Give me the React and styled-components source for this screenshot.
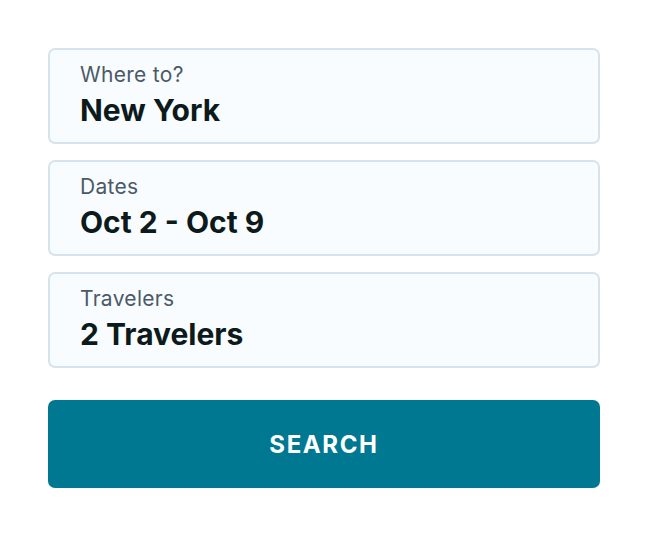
import React from "react";
import styled, { createGlobalStyle } from "styled-components";

const Global = createGlobalStyle`
  html, body { margin: 0; padding: 0; background: #ffffff; }
  body { font-family: Inter, "Noto Sans", sans-serif; }
`;

const Page = styled.div`
  width: 648px;
  height: 536px;
  box-sizing: border-box;
  padding: 48px;
  display: flex;
  flex-direction: column;
`;

const Fields = styled.div`
  display: flex;
  flex-direction: column;
  gap: 16px;
`;

const Field = styled.div`
  box-sizing: border-box;
  height: 96px;
  padding: 12px 30px 0;
  border: 2px solid #d7e3ec;
  border-radius: 7px;
  background: #f8fcfe;
  display: flex;
  flex-direction: column;
`;

const Label = styled.div`
  font-size: 21px;
  line-height: 26px;
  color: #4b5a68;
  font-weight: 400;
  letter-spacing: 0.3px;
`;

const Value = styled.div`
  margin-top: 3px;
  font-size: 30px;
  line-height: 38px;
  color: #0c1a1c;
  font-weight: 700;
`;

const SearchButton = styled.button`
  margin-top: 32px;
  height: 88px;
  border: none;
  border-radius: 7px;
  background: #007892;
  color: #ffffff;
  font-family: Inter, "Noto Sans", sans-serif;
  font-size: 24px;
  font-weight: 700;
  letter-spacing: 1.6px;
  text-transform: uppercase;
  cursor: pointer;
`;

const fields = [
  { label: "Where to?", value: "New York" },
  { label: "Dates", value: "Oct 2 - Oct 9" },
  { label: "Travelers", value: "2 Travelers" },
];

export default function App() {
  return (
    <>
      <Global />
      <Page>
        <Fields>
          {fields.map((f) => (
            <Field key={f.label}>
              <Label>{f.label}</Label>
              <Value>{f.value}</Value>
            </Field>
          ))}
        </Fields>
        <SearchButton>Search</SearchButton>
      </Page>
    </>
  );
}
